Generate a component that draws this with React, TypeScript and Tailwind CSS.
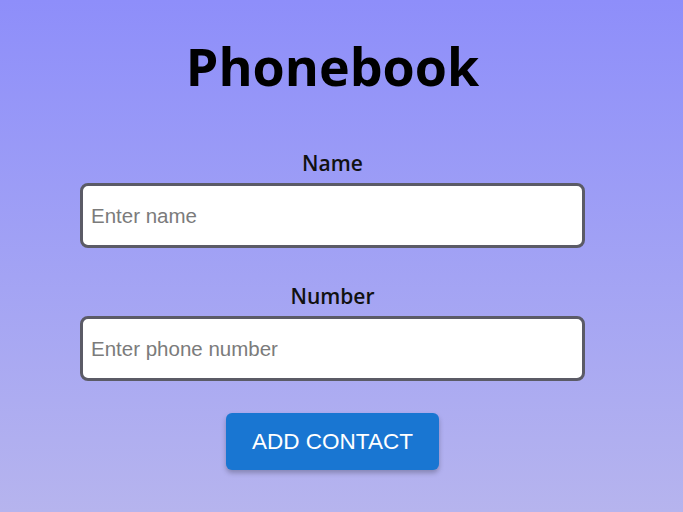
export default function App() {
  return (
    <div className="min-h-[512px] w-full bg-gradient-to-b from-[#8e8efa] to-[#b6b4ee] flex flex-col items-center pr-[18px] font-['Open_Sans',sans-serif]">
      <h1 className="mt-[31px] text-[52px] leading-[70px] font-bold text-black">Phonebook</h1>

      <form className="mt-[48px] w-[505px] flex flex-col items-center" onSubmit={(e) => e.preventDefault()}>
        <label className="text-[21px] leading-[28px] font-semibold text-[#111]">Name</label>
        <input
          placeholder="Enter name"
          className="mt-[6px] w-full h-[65px] bg-white border-[3px] border-[#5b5b66] rounded-[8px] px-[8px] text-[20.5px] font-['Liberation_Sans',sans-serif] placeholder:text-[#7b7b7b] outline-none"
        />

        <label className="mt-[34px] text-[21px] leading-[28px] font-semibold text-[#111]">Number</label>
        <input
          placeholder="Enter phone number"
          className="mt-[6px] w-full h-[65px] bg-white border-[3px] border-[#5b5b66] rounded-[8px] px-[8px] text-[20.5px] font-['Liberation_Sans',sans-serif] placeholder:text-[#7b7b7b] outline-none"
        />

        <button
          type="submit"
          className="mt-[32px] w-[213px] h-[57px] bg-[#1976d2] text-white rounded-[6px] shadow-[0_3px_5px_rgba(0,0,0,0.25)] text-[22.5px] uppercase font-['Liberation_Sans',sans-serif]"
        >
          Add contact
        </button>
      </form>
    </div>
  )
}
